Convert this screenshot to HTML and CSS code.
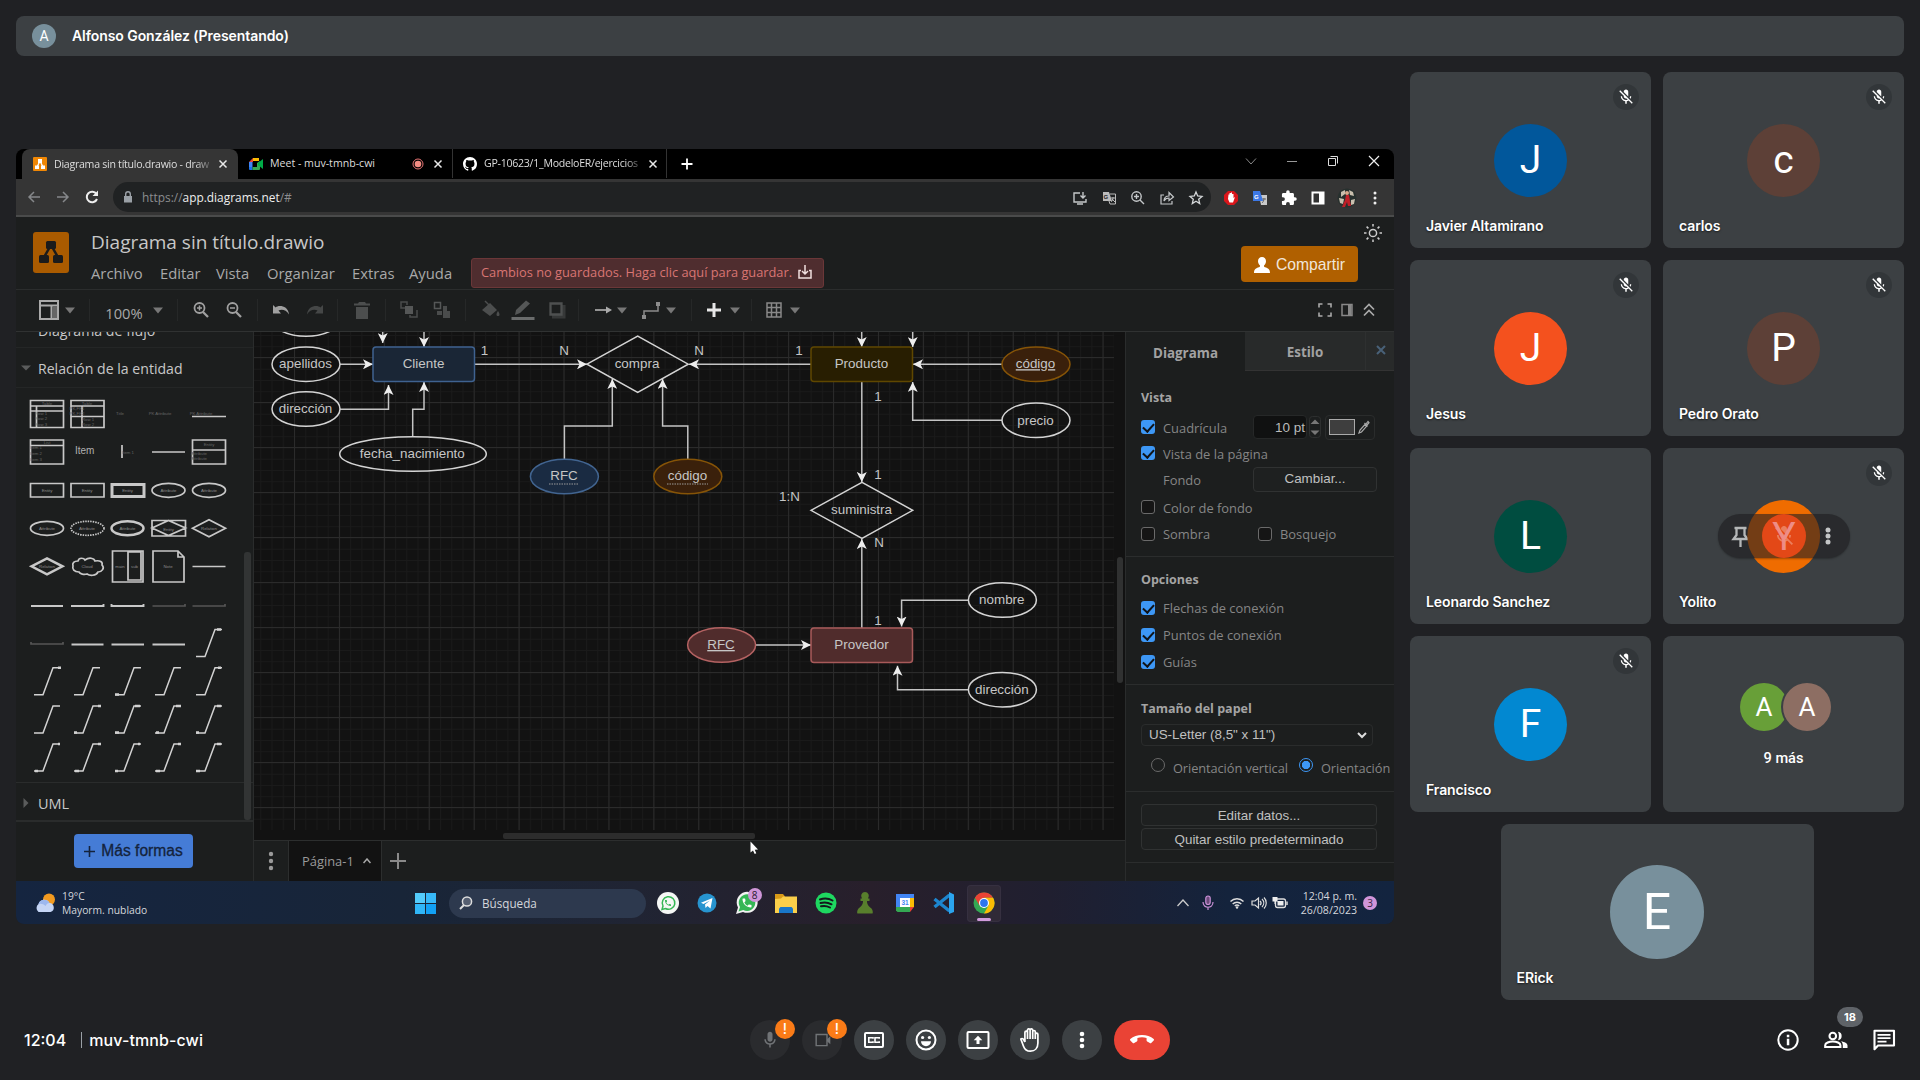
FILE: index.html
```html
<!DOCTYPE html>
<html lang="es">
<head>
<meta charset="utf-8">
<title>Meet - muv-tmnb-cwi</title>
<link rel="stylesheet" href="styles.css">
</head>
<body>
<svg class="defs" aria-hidden="true">
  <symbol id="mic-off" viewBox="0 0 24 24"><path fill="#fff" d="M19 11h-1.7c0 .74-.16 1.43-.43 2.05l1.23 1.23c.56-.98.9-2.09.9-3.28zm-4.02.17c0-.06.02-.11.02-.17V5c0-1.66-1.34-3-3-3S9 3.34 9 5v.18l5.98 5.99zM4.27 3L3 4.27l6.01 6.01V11c0 1.66 1.33 3 2.99 3 .22 0 .44-.03.65-.08l1.66 1.66c-.71.33-1.5.52-2.31.52-2.76 0-5.3-2.1-5.3-5.1H5c0 3.41 2.72 6.23 6 6.72V21h2v-3.28c.91-.13 1.77-.45 2.54-.9L19.73 21 21 19.73 4.27 3z"/></symbol>
  <symbol id="caret" viewBox="-12 -12 24 24"><path fill="#777" d="M-5-2.500H5L0 3.500z"/></symbol>
  <symbol id="sep" viewBox="-12 -12 24 24"><path stroke="#262828" d="M.5-11V11"/></symbol>
  <symbol id="close" viewBox="-12 -12 24 24"><path stroke="#e8e8e8" stroke-width="1.500" d="M-3.500-3.500L3.500 3.500M3.500-3.500L-3.500 3.500"/></symbol>
  <symbol id="phone" viewBox="0 0 24 24"><path d="M6.620 10.790c1.440 2.830 3.760 5.140 6.590 6.590l2.200-2.200c.27-.27.67-.36 1.020-.24 1.120.37 2.330.57 3.570.57.55 0 1 .45 1 1V20c0 .55-.45 1-1 1-9.390 0-17-7.610-17-17 0-.55.45-1 1-1h3.500c.55 0 1 .45 1 1 0 1.250.2 2.450.57 3.570.11.35.03.74-.25 1.020l-2.200 2.200z"/></symbol>
</svg>

<header class="presenter"><span class="presenter-avatar">A</span><span>Alfonso González (Presentando)</span></header>

<main class="stage">
  <section class="share">
    <div class="tabbar">
      <div class="tab tab-active">
        <svg class="fav" viewBox="0 0 14 14"><rect width="14" height="14" rx="1" fill="#f08705"/><path stroke="#fff" stroke-width="1.300" d="M7 4L4 10M7 4l3 6"/><path fill="#fff" d="M5 2h4v4H5zM2 8.500h4V12H2zM8 8.500h4V12H8z"/></svg>
        <span class="tab-title fade">Diagrama sin título.drawio - draw</span>
        <svg class="i" viewBox="-12 -12 24 24"><use href="#close" x="-12" y="-12" width="24" height="24"/></svg>
      </div>
      <div class="tab tab-meet">
        <svg class="fav" viewBox="0 0 14 14"><path fill="#ea4335" d="M0 5l4-4v4z"/><path fill="#fbbc04" d="M4 1h6v3H4z"/><path fill="#4285f4" d="M0 5h3.500v5H0z"/><path fill="#1a73e8" d="M0 10h3.500v3H1a1 1 0 0 1-1-1z"/><path fill="#34a853" d="M3.500 10H8V6l3-2v8a1 1 0 0 1-1 1H3.500z"/><path fill="#00ac47" d="M9 6l5-4v10L9 8z"/></svg>
        <span class="tab-title">Meet - muv-tmnb-cwi</span>
        <svg class="i" viewBox="-12 -12 24 24"><circle r="5" fill="none" stroke="#e57373"/><circle r="3.300" fill="#f28b82"/></svg>
        <svg class="i" viewBox="-12 -12 24 24"><use href="#close" x="-12" y="-12" width="24" height="24"/></svg>
      </div>
      <div class="tab tab-git">
        <svg class="fav" viewBox="0 0 16 16"><path fill="#fff" d="M8 0C3.580 0 0 3.580 0 8c0 3.540 2.290 6.530 5.470 7.590.4.07.55-.17.55-.38 0-.19-.01-.82-.01-1.490-2.010.37-2.530-.49-2.690-.94-.09-.23-.48-.94-.82-1.130-.28-.15-.68-.52-.01-.53.63-.01 1.080.58 1.230.82.72 1.210 1.870.87 2.330.66.07-.52.28-.87.51-1.070-1.780-.2-3.640-.89-3.640-3.950 0-.87.31-1.590.82-2.150-.08-.2-.36-1.020.08-2.120 0 0 .67-.21 2.200.82.64-.18 1.320-.27 2-.27s1.360.09 2 .27c1.530-1.040 2.200-.82 2.200-.82.44 1.100.16 1.920.08 2.120.51.56.82 1.270.82 2.150 0 3.070-1.870 3.750-3.650 3.950.29.25.54.73.54 1.480 0 1.070-.01 1.930-.01 2.200 0 .21.15.46.55.38A8.010 8.010 0 0 0 16 8c0-4.420-3.580-8-8-8z"/></svg>
        <span class="tab-title fade">GP-10623/1_ModeloER/ejercicios</span>
        <svg class="i" viewBox="-12 -12 24 24"><use href="#close" x="-12" y="-12" width="24" height="24"/></svg>
      </div>
      <svg class="i newtab" viewBox="-12 -12 24 24"><path stroke="#fff" stroke-width="1.800" d="M-5.500 0h11M0-5.500v11"/></svg>
      <div class="winctl">
        <svg class="i" viewBox="-12 -12 24 24"><path fill="none" stroke="#888" d="M-5-2.500L0 3l5-5.500"/></svg>
        <svg class="i" viewBox="-12 -12 24 24"><path stroke="#999" d="M-5 .5H5"/></svg>
        <svg class="i" viewBox="-12 -12 24 24"><path fill="none" stroke="#ddd" d="M-4.500-2.500h7v7h-7zM-2.500-4.500h7v7"/></svg>
        <svg class="i" viewBox="-12 -12 24 24"><path stroke="#eee" stroke-width="1.200" d="M-5-5L5 5M5-5L-5 5"/></svg>
      </div>
    </div>

    <div class="navbar">
      <svg class="i" viewBox="-12 -12 24 24"><path fill="none" stroke="#85878a" stroke-width="1.500" d="M6 0H-5M0-5l-5 5 5 5"/></svg>
      <svg class="i" viewBox="-12 -12 24 24"><path fill="none" stroke="#85878a" stroke-width="1.500" d="M-6 0H5M0-5l5 5-5 5"/></svg>
      <svg class="i" viewBox="-12 -12 24 24"><path fill="none" stroke="#eee" stroke-width="2" d="M4.500-3A5.300 5.300 0 1 0 5 2"/><path fill="#eee" d="M6-6.500V-1H.5z"/></svg>
      <div class="omnibox">
        <svg class="lock" viewBox="0 0 10 12"><path fill="#9aa0a6" d="M1 5h8v6.500H1z"/><path fill="none" stroke="#9aa0a6" stroke-width="1.400" d="M2.700 5V3a2.300 2.300 0 0 1 4.600 0v2"/></svg>
        <span class="url">https://<b>app.diagrams.net</b>/#</span>
        <div class="omni-icons">
          <svg class="i" viewBox="-12 -12 24 24"><path fill="none" stroke="#c4c7c9" stroke-width="1.400" d="M0-5h-6v9h12V1M-3 6h6M3-6v6M.5-2.500L3 0l2.500-2.500"/></svg>
          <svg class="i" viewBox="-12 -12 24 24"><path fill="#bbb" d="M-6-6h6l3 9h-9z"/><path fill="none" stroke="#bbb" d="M1-4h5.500V6H1L0 3M2 0h4M4-1v1c0 2-1 3-2 4M3 1l3 3"/><text x="-5.500" y="1" class="gmark dark">G</text></svg>
          <svg class="i" viewBox="-12 -12 24 24"><path fill="none" stroke="#c4c7c9" stroke-width="1.400" d="M2 2l4 4M-4-1.500h5M-1.500-4v5"/><circle cx="-1.500" cy="-1.500" r="4.700" fill="none" stroke="#c4c7c9" stroke-width="1.400"/></svg>
          <svg class="i" viewBox="-12 -12 24 24"><path fill="none" stroke="#c4c7c9" stroke-width="1.200" d="M-3-3h-3V6H5V3M-3 3c0-4 2-5 5-5v-3.500L6.500-1 2 2.500V0C0 0-2 1-3 3z"/></svg>
          <svg class="i" viewBox="-12 -12 24 24"><path fill="none" stroke="#d4d7d9" stroke-width="1.300" d="M0-6l1.700 4 4.300.4-3.300 2.800 1 4.300L0 3.200l-3.700 2.300 1-4.300L-6-1.600l4.300-.4z"/></svg>
        </div>
      </div>
      <div class="ext">
        <svg class="i" viewBox="-12 -12 24 24"><path fill="#d9161b" d="M-3-7h6l4 4v6L3 7h-6l-4-4v-6z"/><path fill="#fff" d="M-2.500-3.500h1V-5H0v-.5h1V-4h1.500v4L4-1 2 4.500h-3.500L-3 1z"/></svg>
        <svg class="i" viewBox="-12 -12 24 24"><path fill="#c9c9c9" d="M-1-3h8v10H1z"/><path stroke="#666" fill="none" d="M2 1h4M4 0c0 3-1 4-2 5"/><path fill="#3c78e6" d="M-7-7h7l3 10h-10z"/><text x="-6" y="1" class="gmark">G</text></svg>
        <svg class="i" viewBox="-5 -5 34 34"><path fill="#fff" d="M20.500 11H19V7c0-1.100-.9-2-2-2h-4V3.500a2.500 2.500 0 0 0-5 0V5H4c-1.100 0-2 .9-2 2v3.800h1.500a2.700 2.700 0 0 1 0 5.400H2V20c0 1.100.9 2 2 2h3.800v-1.500a2.700 2.700 0 0 1 5.400 0V22H17c1.100 0 2-.9 2-2v-4h1.500a2.500 2.500 0 0 0 0-5z"/></svg>
        <svg class="i" viewBox="-12 -12 24 24"><path fill="#fff" d="M-6.500-6.500h13v13h-13z"/><path fill="#333" d="M-4.500-4.500H1v9h-5.500z"/></svg>
        <svg class="i" viewBox="-12 -12 24 24"><circle r="9.500" fill="#27302e"/><path fill="#c9bfae" d="M-6-6l4-2v4l-4 3zM2-8l4 2 1 4-4-1zM-8 0l5 1-1 5-3-1zM4 2l4-1-1 5-3 1z"/><path fill="#c01f28" d="M-1-3l3 0 1 6 1 5h-3l-1-4-2 5h-3l3-7z"/><circle cy="-5" r="2" fill="#d9a98c"/></svg>
        <svg class="i" viewBox="-12 -12 24 24"><g fill="#eee"><circle cy="-5" r="1.500"/><circle r="1.500"/><circle cy="5" r="1.500"/></g></svg>
      </div>
    </div>

    <div class="app-head">
      <svg class="logo" viewBox="0 0 36 41"><rect width="36" height="41" rx="3" fill="#aa5b00"/><path stroke="#1b1b1b" stroke-width="2.500" d="M18 13l-8 14M18 13l8 14"/><g fill="#1b1b1b"><rect x="13" y="9" width="10" height="8" rx="1.500"/><rect x="6" y="23" width="10" height="8" rx="1.500"/><rect x="20" y="23" width="10" height="8" rx="1.500"/></g></svg>
      <div class="head-main">
        <div class="doc-title">Diagrama sin título.drawio</div>
        <div class="menu">
          <span>Archivo</span><span>Editar</span><span>Vista</span><span>Organizar</span><span>Extras</span><span>Ayuda</span>
          <div class="unsaved"><span>Cambios no guardados. Haga clic aquí para guardar.</span>
            <svg viewBox="0 0 14 14"><path fill="none" stroke="#f1dede" stroke-width="1.500" d="M3 5.500H1V13h12V5.500h-2M7 0v9M4 6l3 3 3-3"/></svg></div>
        </div>
      </div>
      <div class="head-side">
        <svg class="i sun" viewBox="-12 -12 24 24"><g fill="none" stroke="#ccc" stroke-width="1.500"><circle r="3.600"/><path d="M0-9v2.500M0 6.500V9M-9 0h2.500M6.500 0H9M-6.400-6.400l1.800 1.800M4.600 4.600l1.800 1.800M-6.400 6.400l1.800-1.800M4.600-4.600l1.800-1.800"/></g></svg>
        <div class="share-btn"><svg viewBox="0 0 16 16"><path fill="#fff" d="M8 0c2.500 0 4 1.800 4 4.200 0 2-1 3.300-2 4.200 0 1 0 1.300 1 1.800 3 1 5 1.800 5 5.800H0c0-4 2-4.800 5-5.800 1-.5 1-.8 1-1.800-1-.9-2-2.200-2-4.200C4 1.800 5.500 0 8 0z"/></svg>Compartir</div>
      </div>
    </div>

    <div class="toolbar">
      <svg class="i" viewBox="-12 -12 24 24"><path fill="none" stroke="#aaa" stroke-width="2" d="M-9-9H9V9H-9zM-9-4.500H9M2.500-4V9"/><path fill="#666" d="M3.500-3.500H8V8H3.500z"/></svg>
      <svg class="i"><use href="#caret"/></svg>
      <svg class="i"><use href="#sep"/></svg>
      <span class="zoom">100%</span>
      <svg class="i"><use href="#caret"/></svg>
      <svg class="i"><use href="#sep"/></svg>
      <svg class="i" viewBox="-12 -12 24 24"><g fill="none" stroke="#a0a0a0" stroke-width="1.800"><circle cx="-1.500" cy="-2" r="5"/><path d="M2 2l5 5" stroke-width="2.300"/><path stroke-width="1.500" d="M-4-2h5M-1.500-4.500v5"/></g></svg>
      <svg class="i" viewBox="-12 -12 24 24"><g fill="none" stroke="#a0a0a0" stroke-width="1.800"><circle cx="-1.500" cy="-2" r="5"/><path d="M2 2l5 5" stroke-width="2.300"/><path stroke-width="1.500" d="M-4-2h5"/></g></svg>
      <svg class="i"><use href="#sep"/></svg>
      <svg class="i" viewBox="-12 -12 24 24"><path fill="#a0a0a0" d="M-8-5l2.700 2.500C-3-5 7-5 8 4.500 5-1 0-1-2.500.5L0 3.500h-8z"/></svg>
      <svg class="i" viewBox="-12 -12 24 24"><path fill="#454747" d="M8-5L5.300-2.500C3-5-7-5-8 4.500-5-1 0-1 2.500.5L0 3.500h8z"/></svg>
      <svg class="i"><use href="#sep"/></svg>
      <svg class="i" viewBox="-12 -12 24 24"><path fill="#4c4e4e" d="M-8-6.500h4l1-1.500h6l1 1.500h4v2H-8zM-6-3H6V9H-6z"/></svg>
      <svg class="i"><use href="#sep"/></svg>
      <svg class="i" viewBox="-12 -12 24 24"><path fill="none" stroke="#4a4c4c" stroke-width="1.500" d="M-4-2h-4v-6h6v3M8 0v7H1V5"/><path fill="#555757" d="M-4-4h8v8h-8z"/></svg>
      <svg class="i" viewBox="-12 -12 24 24"><path fill="none" stroke="#555757" stroke-width="1.500" d="M-7.500-7.500h6v6h-6z"/><path fill="#4a4c4c" d="M1-4h4v5H1zM-5 1h5v4h-5zM1 1h7v7H1z"/></svg>
      <svg class="i"><use href="#sep"/></svg>
      <svg class="i" viewBox="-12 -12 24 24"><path fill="none" stroke="#4c4e4e" stroke-width="1.500" d="M-5-9L3-1"/><path fill="#4c4e4e" d="M-8 0L0-7l7 7-7 6zM8 1c2 3 2 5 0 5s-2-2 0-5z"/></svg>
      <svg class="i" viewBox="-12 -12 24 24"><path fill="#555757" d="M-8 5l1-5L3-9.500l4 3L-3 3z"/><path fill="#6a6c6c" d="M-11.500 7h23v3h-23z"/></svg>
      <svg class="i" viewBox="-12 -12 24 24"><path fill="#363838" d="M-5-5H8.500V8.500H-5z"/><path fill="#1c1e1e" stroke="#4e5050" stroke-width="2.300" d="M-6.500-6.500h11v11h-11z"/></svg>
      <svg class="i"><use href="#sep"/></svg>
      <svg class="i" viewBox="-12 -12 24 24"><path stroke="#aaa" stroke-width="1.700" d="M-8 0H5"/><path fill="#aaa" d="M3-3.500L9 0 3 3.500z"/></svg>
      <svg class="i"><use href="#caret"/></svg>
      <svg class="i" viewBox="-12 -12 24 24"><path fill="none" stroke="#8c8c8c" stroke-width="1.500" d="M-7 6V1H7v-6"/><path fill="#8c8c8c" d="M-9 5h4v4h-4zM5-8h4v4H5z"/></svg>
      <svg class="i"><use href="#caret"/></svg>
      <svg class="i"><use href="#sep"/></svg>
      <svg class="i" viewBox="-12 -12 24 24"><path stroke="#e8e8e8" stroke-width="3" d="M-7 0H7M0-7V7"/></svg>
      <svg class="i"><use href="#caret"/></svg>
      <svg class="i"><use href="#sep"/></svg>
      <svg class="i" viewBox="-12 -12 24 24"><path fill="none" stroke="#888" stroke-width="1.500" d="M-7-7H7V7H-7zM-2.500-7V7M2.500-7V7M-7-2.500H7M-7 2.500H7"/></svg>
      <svg class="i"><use href="#caret"/></svg>
      <svg class="i" viewBox="-12 -12 24 24"><path fill="none" stroke="#aaa" stroke-width="1.600" d="M-2.500-6H-6v3.500M2.500-6H6v3.500M-2.500 6H-6V2.500M2.500 6H6V2.500"/></svg>
      <svg class="i" viewBox="-12 -12 24 24"><path fill="none" stroke="#888" stroke-width="1.500" d="M-5-5.500H5v11H-5z"/><path fill="#888" d="M1-5h3.500V5H1z"/></svg>
      <svg class="i" viewBox="-12 -12 24 24"><path fill="none" stroke="#aaa" stroke-width="1.700" d="M-5-.5l5-5 5 5M-5 5.500l5-5 5 5"/></svg>
    </div>

    <div class="work">
      <aside class="sidebar">
        <div class="cut-row"><span>Diagrama de flujo</span></div>
        <div class="lib-head"><svg viewBox="0 0 12 12"><path fill="#5a5c5c" d="M1 2.500h10L6 7.500z"/></svg>Relación de la entidad</div>
        <svg class="palette" viewBox="16 388 228 394">
          <defs>
            <path id="elbow" d="M0 27.500h9L19 .5h7"/>
          </defs>
          <g fill="none" stroke="#c8c8c8" stroke-width="1.700">
            <path d="M30.500 400.500h33v27h-33zM30 406h34M30 411h34M36.500 406v21M71 400.500h33v27H71zM71 406h33M71 416.500h33M82 406v21M192 416.500h34"/>
            <path d="M30.500 440h33v24h-33zM30 445.500h34M122 445v13M152 452h33M192.500 440h33v24h-33zM192 450h34"/>
            <path d="M30.500 483.500h33v13.500h-33zM71 483.500h33v13.500H71z"/>
            <path stroke-width="3" d="M112 484.500h32v12h-32z"/>
            <ellipse cx="168.500" cy="490.300" rx="16.500" ry="7"/><ellipse cx="209" cy="490.300" rx="16.500" ry="7"/>
            <ellipse cx="47" cy="528.300" rx="16.500" ry="7"/><ellipse cx="87.500" cy="528.300" rx="16.500" ry="7" stroke-dasharray="1.500 1"/><ellipse cx="127.500" cy="528.300" rx="16" ry="7" stroke-width="2.500"/>
            <path d="M152 520.500h33.500V536H152zM152 528l16.500-7.500 17 7.500-17 7.500zM192.500 528.300l16.500-8.500 16.500 8.500-16.500 8.500z"/>
            <path stroke-width="2.500" d="M31.500 566.300l15.500-8 15.500 8-15.500 8z"/>
            <path d="M78 561c1-4 6-3 7-1 4-3 9-2 10 1 5-1 8 1 7 4 3 3 0 7-4 7-2 4-8 4-11 2-3 1-7 0-8-2-5 0-7-3-6-6-1-3 1-5 5-5z"/>
            <path d="M112.500 551h30.500v31h-30.500zM128 552h13v28h-13zM153 551h25l6 6v25h-31zM178 551v6h6M192.500 566.500h33"/>
            <path d="M31 606h32M71 606h32.500v-2M111.500 604v2h32v-2M71.500 644.500h32M111.500 644.500h32.500M152.500 644.500h32.500" stroke-width="1.900"/>
            <path stroke="#555" d="M152.500 606H185v-2M192.500 606H225v-2M31 642v2h32v-2"/>
          </g>
          <g fill="none" stroke="#d2d2d2" stroke-width="1.500">
            <use href="#elbow" x="196" y="629"/>
            <use href="#elbow" x="34" y="667.300"/><use href="#elbow" x="74" y="667.300"/><use href="#elbow" x="115" y="667.300"/><use href="#elbow" x="155" y="667.300"/><use href="#elbow" x="196" y="667.300"/>
            <use href="#elbow" x="34" y="705.500"/><use href="#elbow" x="74" y="705.500"/><use href="#elbow" x="115" y="705.500"/><use href="#elbow" x="155" y="705.500"/><use href="#elbow" x="196" y="705.500"/>
            <use href="#elbow" x="34" y="743.500"/><use href="#elbow" x="74" y="743.500"/><use href="#elbow" x="115" y="743.500"/><use href="#elbow" x="155" y="743.500"/><use href="#elbow" x="196" y="743.500"/>
            <path stroke-width="2.600" d="M217 629.500h4M58 667.800h3M218 667.800h3M115 694.500h4M98 706h3M135 706h5M176 706h5M217 706h4M74 732.500h3M115 732.500h4M156 732.500h3M196 732.500h3M58 744h2M98 744h3M138 744h2M178 744h3M217 744h4M35 771h3M75 771h4M115 771h3M156 771h4M196 771h4"/>
          </g>
          <g class="tiny">
            <text x="47" y="404.500">Table</text><text x="87" y="404.500">Table</text><text x="120" y="415">Title</text><text x="160" y="415">PK Attribute</text><text x="201" y="415">PK Attribute</text>
            <text x="47" y="444">List</text><text x="36" y="449">Item 1</text><text x="36" y="455">Item 2</text><text x="36" y="461">Item 3</text><text x="128" y="454">Item 1</text><text x="209" y="446">Entity</text><text x="199" y="455">Attribute</text><text x="199" y="460">Attribute</text>
            <text x="41" y="415">Row 1</text><text x="41" y="420">Row 2</text><text x="41" y="426">Row 3</text><text x="77" y="410">PK,FK1</text><text x="77" y="415">PK,FK2</text><text x="88" y="421">Row 1</text><text x="88" y="426">Row 2</text>
          </g>
          <g class="tiny lit">
            <text x="47" y="492">Entity</text><text x="87" y="492">Entity</text><text x="127.500" y="492">Entity</text><text x="168.500" y="492">Attribute</text><text x="209" y="492">Attribute</text>
            <text x="47" y="530">Attribute</text><text x="87" y="530">Attribute</text><text x="127.500" y="530">Attribute</text><text x="168.500" y="531">Entity</text><text x="209" y="530">Relation</text>
            <text x="47" y="568">Relation</text><text x="87" y="568">Cloud</text><text x="120" y="568">main</text><text x="134.500" y="568">sub</text><text x="168" y="568">Note</text>
          </g>
          <text x="75" y="453.500" class="item">Item</text>
        </svg>
        <div class="lib-head lib-uml"><svg viewBox="0 0 12 12"><path fill="#5a5c5c" d="M3.500 1v10l5-5z"/></svg>UML</div>
        <div class="more"><button class="more-btn"><svg viewBox="0 0 11 11"><path stroke="#14233c" stroke-width="1.600" d="M0 5.500h11M5.500 0v11"/></svg>Más formas</button></div>
        <i class="side-scroll"></i>
      </aside>

      <section class="canvas">
        <svg class="diagram" viewBox="254 332 871 508">
          <defs>
            <pattern id="minor" x="294" y="402.500" width="11.230" height="11.250" patternUnits="userSpaceOnUse"><path fill="none" stroke="#1a1a1a" d="M.5 0v11.250M0 .5h11.230"/></pattern>
            <pattern id="major" x="294" y="402" width="44.920" height="45" patternUnits="userSpaceOnUse"><path fill="none" stroke="#2b2b2b" d="M.5 0v45M0 .5h44.920"/></pattern>
            <marker id="arrow" viewBox="0 0 10 10" refX="10" refY="5" markerWidth="10" markerHeight="10" markerUnits="userSpaceOnUse" orient="auto"><path fill="#eee" d="M0 0l10 5-10 5 2.500-5z"/></marker>
          </defs>
          <rect x="254" y="332" width="860" height="498" fill="url(#minor)"/>
          <rect x="254" y="332" width="860" height="498" fill="url(#major)"/>
          <g fill="none" stroke="#c4c4c4" stroke-width="1.500" marker-end="url(#arrow)">
            <path d="M340 364.300h33"/>
            <path d="M382.700 325v18"/><path d="M424 325v22"/>
            <path d="M340 409.300h48.500V385"/><path d="M412.700 437v-27.700H424V382"/>
            <path d="M475 364.300h112"/><path d="M811 364.300H689"/>
            <path d="M861.700 325v22"/><path d="M912.700 325v22"/>
            <path d="M1002 364.300h-89"/><path d="M1002 420.300h-89.300V382"/>
            <path d="M861.800 382v100"/><path d="M861.800 628v-89"/>
            <path d="M564.400 459v-33h47.900v-47"/><path d="M687.800 459v-33h-25.200v-47"/>
            <path d="M968.600 600.300h-67v26.200"/><path d="M968.600 689.700h-71.100v-24"/><path d="M756 645h55"/>
          </g>
          <g fill="none" stroke="#d4d4d4" stroke-width="1.500">
            <ellipse cx="306" cy="319" rx="34" ry="17.300"/><ellipse cx="306" cy="364.200" rx="34" ry="17.300"/><ellipse cx="306" cy="409" rx="34" ry="17.300"/>
            <ellipse cx="413" cy="454" rx="73.300" ry="17.300"/>
            <path d="M587 364.200l50.700-28.200 50.500 28.200-50.500 28.200zM811 510.300l51-28 50.700 28-50.700 28z"/>
            <ellipse cx="1036" cy="420.300" rx="34" ry="17.300"/><ellipse cx="1002.400" cy="600" rx="34" ry="17.300"/><ellipse cx="1002.400" cy="689.700" rx="34" ry="17.300"/>
          </g>
          <g stroke-width="1.500">
            <rect x="373" y="347" width="101.500" height="34.500" rx="3" fill="#1a2636" stroke="#3f6290"/>
            <rect x="811" y="347" width="101.500" height="34.500" rx="3" fill="#281e01" stroke="#5f4700"/>
            <rect x="811" y="628" width="101.500" height="34.500" rx="3" fill="#502c2c" stroke="#a85a5a"/>
            <ellipse cx="1036" cy="364.300" rx="34" ry="17.300" fill="#3a200b" stroke="#865407"/>
            <ellipse cx="564.400" cy="476.500" rx="34" ry="17.300" fill="#1a2b42" stroke="#426591"/>
            <ellipse cx="687.800" cy="476.500" rx="34" ry="17.300" fill="#3a200b" stroke="#865407"/>
            <ellipse cx="721.600" cy="645" rx="34" ry="17.300" fill="#502c2c" stroke="#b46262"/>
          </g>
          <path stroke="#999" stroke-dasharray="1.500 1" d="M549 484h29M667 484h41"/>
          <g class="node">
            <text x="305.500" y="368.200">apellidos</text><text x="305.500" y="413.200">dirección</text><text x="412.300" y="458.200">fecha_nacimiento</text><text x="423.500" y="368.200">Cliente</text>
            <text x="637" y="368.200">compra</text><text x="861.500" y="368.200">Producto</text><text x="1035.500" y="368.200" class="u">código</text><text x="1035.500" y="424.500">precio</text>
            <text x="564" y="480.200">RFC</text><text x="687.500" y="480.200">código</text><text x="861.500" y="514.200">suministra</text>
            <text x="1001.800" y="604.200">nombre</text><text x="861.500" y="649">Provedor</text><text x="721" y="649" class="u">RFC</text><text x="1001.800" y="694">dirección</text>
            <text x="484.500" y="355.200">1</text><text x="564" y="355.200">N</text><text x="699" y="355.200">N</text><text x="799" y="355.200">1</text><text x="878" y="401">1</text><text x="878" y="479">1</text><text x="789.500" y="501.200">1:N</text><text x="879" y="546.700">N</text><text x="878" y="625">1</text>
          </g>
          <rect x="503" y="833" width="252" height="6" rx="2" fill="#2c2c2c"/>
          <rect x="1117" y="557" width="6" height="126" rx="3" fill="#303131"/>
        </svg>
        <div class="pages">
          <svg class="i dots" viewBox="-12 -12 24 24"><g fill="#9a9a9a"><circle cy="-7" r="2.200"/><circle r="2.200"/><circle cy="7" r="2.200"/></g></svg>
          <div class="page-tab">Página-1<svg viewBox="0 0 8 6"><path fill="none" stroke="#aaa" stroke-width="1.500" d="M.5 5L4 1l3.500 4"/></svg></div>
          <svg class="i add" viewBox="-12 -12 24 24"><path stroke="#8a8a8a" stroke-width="2" d="M-8 0H8M0-8V8"/></svg>
        </div>
        <svg class="cursor" viewBox="0 0 9 13"><path fill="#fff" d="M.5.500v11l2.500-2 1.700 3.500 1.600-.8L4.700 8.800l3.300-.3z"/></svg>
      </section>

      <aside class="format">
        <div class="ftabs"><div class="ftab-on">Diagrama</div><div class="ftab">Estilo</div><div class="fclose"><svg viewBox="0 0 10 10"><path stroke="#496178" stroke-width="2" d="M1 1l8 8M9 1L1 9"/></svg></div></div>
        <div class="fsec sec-view">
          <h4>Vista</h4>
          <div class="frow r1"><i class="cb on"></i><span class="lab">Cuadrícula</span><span class="num">10 pt</span><svg class="spin" viewBox="0 0 12 22"><rect x=".5" y=".5" width="11" height="21" rx="3" fill="none" stroke="#2d2f2f"/><path fill="#777" d="M1.500 8L6 3.500 10.500 8zM1.500 14.500h9L6 19z"/></svg>
            <span class="swatch"><i></i><svg viewBox="0 0 12 14"><path fill="none" stroke="#aaa" stroke-width="1.200" d="M1 13l1-3 5-5.500 1.500 1.800L3.500 12zM6.500 3l3 3.500M8 4l2-2.500 1 1.200L9 5"/></svg></span></div>
          <div class="frow r2"><i class="cb on"></i><span class="lab">Vista de la página</span></div>
          <div class="frow r3"><span class="lab fondo">Fondo</span><span class="btn">Cambiar...</span></div>
          <div class="frow r4"><i class="cb"></i><span class="lab">Color de fondo</span></div>
          <div class="frow r5"><i class="cb"></i><span class="lab half">Sombra</span><i class="cb"></i><span class="lab">Bosquejo</span></div>
        </div>
        <div class="fsec sec-opt">
          <h4>Opciones</h4>
          <div class="frow"><i class="cb on"></i><span class="lab">Flechas de conexión</span></div>
          <div class="frow"><i class="cb on"></i><span class="lab">Puntos de conexión</span></div>
          <div class="frow"><i class="cb on"></i><span class="lab">Guías</span></div>
        </div>
        <div class="fsec sec-paper">
          <h4>Tamaño del papel</h4>
          <div class="select">US-Letter (8,5" x 11")<svg viewBox="0 0 10 7"><path fill="none" stroke="#ddd" stroke-width="2" d="M1 1l4 4 4-4"/></svg></div>
          <div class="radios"><i class="rb"></i><span class="lab vert">Orientación vertical</span><i class="rb sel"></i><span class="lab">Orientación</span></div>
        </div>
        <div class="fsec sec-btn"><span class="btn">Editar datos...</span><span class="btn">Quitar estilo predeterminado</span></div>
      </aside>
    </div>

    <footer class="taskbar">
      <svg class="weather" viewBox="0 0 22 20"><circle cx="15.500" cy="6.500" r="6" fill="#f29a1f"/><path fill="#c5d5f5" d="M5 19a5 5 0 0 1 0-8 6 6 0 0 1 11-1 4.600 4.600 0 0 1 1 9z"/><path fill="#9db8ee" d="M5 11a6 6 0 0 1 11-1c-2 0-3 1-4 3-2-2-4-2.500-7-2z"/></svg>
      <div class="wtext">19°C<br>Mayorm. nublado</div>
      <svg class="start" viewBox="0 0 21 21"><path fill="#53cbfb" d="M0 0h10v10H0z"/><path fill="#37b9f9" d="M11 0h10v10H11z"/><path fill="#30b6f8" d="M0 11h10v10H0z"/><path fill="#12a1f5" d="M11 11h10v10H11z"/></svg>
      <div class="search"><svg viewBox="0 0 14 14"><circle cx="8" cy="5.500" r="4.600" fill="#555e70" stroke="#ddd" stroke-width="1.500"/><path stroke="#ddd" stroke-width="2" d="M1 13l4-4"/></svg>Búsqueda</div>
      <div class="apps">
        <svg class="a" viewBox="-12 -12 24 24"><circle r="11" fill="#f5f7f5"/><path fill="none" stroke="#35b755" stroke-width="1.500" d="M-6 6.500l1-3.500a6.300 6.300 0 1 1 2.500 2.500z"/><use href="#phone" x="-4" y="-4" width="8" height="8" fill="#35b755"/></svg>
        <svg class="a" viewBox="-12 -12 24 24"><circle r="9.500" fill="#2794cf"/><path fill="#fff" d="M-6-.3L5.500-5 3.500 5.500.5 3-1.500 5l-.5-3.500L3-2.500-3.500 1z"/></svg>
        <svg class="a" viewBox="-12 -12 24 24"><path fill="#f2f2f2" d="M-11 11l2-6.500A10.500 10.500 0 1 1-4 9z"/><path fill="#35b755" d="M-8.500 8.500L-7 4a8.300 8.300 0 1 1 3.300 3z"/><use href="#phone" x="-6" y="-6" width="12" height="12" fill="#fff"/></svg>
        <svg class="a" viewBox="-12 -12 24 24"><path fill="#d99a18" d="M-11-9h8l2 2.500v4h-10z"/><path fill="#fbcf4a" d="M-11-4l6-.5 2-2h14V10h-22z"/><path fill="#1977c9" d="M-7 10V5.500l1.500-1.500h11L7 5.500V10z"/></svg>
        <svg class="a" viewBox="-12 -12 24 24"><circle r="10.500" fill="#1ed760"/><path fill="none" stroke="#14181c" stroke-width="2" stroke-linecap="round" d="M-6-3.500c4-1.500 9-1 12.500 1M-5.500 0C-2-1 2-.7 5.500 1.300M-5 3.300c3-.8 6-.5 9 1.200"/></svg>
        <svg class="a" viewBox="-12 -12 24 24"><path fill="#587f2c" d="M0-11a4 4 0 0 1 3 6.500h1.500V-2H2c0 4 2 5.500 4.500 7.500C8 7 8 10.500 7.500 10.500h-15C-8 10.500-8 7-6.500 5.500-4 3.500-2 2-2-2h-2.500v-2.500H-3A4 4 0 0 1 0-11z"/></svg>
        <svg class="a" viewBox="-12 -12 24 24"><path fill="#4285f4" d="M-9-9H9v13H-9z"/><path fill="#fbbc04" d="M5-5h4v9H5z"/><path fill="#34a853" d="M-9 4H5v5H-7.500L-9 7.500z"/><path fill="#ea4335" d="M5 4h4L5 9z"/><path fill="#fff" d="M-5-5H5V4H-5z"/><text x="0" y="2.300" class="cal">31</text></svg>
        <svg class="a" viewBox="-12 -12 24 24"><path fill="none" stroke="#1d86cf" stroke-width="3.400" d="M-9.500 4L5.500-8M-9.500-4L5.500 8"/><path fill="#2ba4ee" d="M5-11l5 2.500V9L5 11z"/></svg>
        <div class="chrome"><svg class="a" viewBox="-12 -12 24 24"><circle r="10.500" fill="#34a853"/><path fill="#ea4335" d="M-9.100-5.250A10.500 10.500 0 0 1 9.100-5.250H0L-4.500 2.600z"/><path fill="#fbbc04" d="M9.100-5.250A10.500 10.500 0 0 1 0 10.500L4.550 2.600 0-5.250z"/><circle r="5" fill="#fff"/><circle r="3.900" fill="#2f75ec"/></svg></div>
        <span class="wbadge">8</span>
      </div>
      <div class="tray">
        <svg class="i" viewBox="-12 -12 24 24"><path fill="none" stroke="#ccc" stroke-width="1.300" d="M-5.500 3L0-3l5.500 6"/></svg>
        <svg class="i" viewBox="-12 -12 24 24"><rect x="-2.200" y="-7" width="4.400" height="8.500" rx="2.200" fill="#6b4a7a" stroke="#c990d6" stroke-width="1.200"/><path fill="none" stroke="#c990d6" stroke-width="1.200" d="M-5-1c0 7 10 7 10 0M0 4v3"/></svg>
        <svg class="i" viewBox="-12 -12 24 24"><g fill="none" stroke="#ddd" stroke-width="1.400"><path d="M-6.500-1.500a9 9 0 0 1 13 0M-4.300 1a6 6 0 0 1 8.600 0M-2.200 3a3.200 3.200 0 0 1 4.400 0"/></g><circle cy="4.500" r="1.200" fill="#ddd"/></svg>
        <svg class="i" viewBox="-12 -12 24 24"><path fill="none" stroke="#ddd" stroke-width="1.200" d="M-6-2h3l3.500-3V5L-3 2h-3zM2-2.200c1.300 1.300 1.300 3.100 0 4.400M4-4c2.300 2.300 2.300 5.700 0 8M6-5.500c3 3 3 8 0 11"/></svg>
        <svg class="i" viewBox="-12 -12 24 24"><rect x="-4.500" y="-4" width="10" height="8.500" rx="2" fill="none" stroke="#ddd" stroke-width="1.300"/><path stroke="#ddd" stroke-width="1.500" d="M7-1.500v3.500"/><path fill="#eee" d="M-7.500-6h5v4.500h-2V1h-1v-2.500h-2zM-2.500-2H3.500v4.500h-6z"/></svg>
        <div class="clock">12:04 p. m.<br>26/08/2023</div>
        <span class="tray-badge">3</span>
      </div>
    </footer>
  </section>

  <aside class="people">
    <div class="tile"><span class="av blue">J</span><span class="mute"><svg><use href="#mic-off"/></svg></span><span class="name">Javier Altamirano</span></div>
    <div class="tile"><span class="av brown">c</span><span class="mute"><svg><use href="#mic-off"/></svg></span><span class="name">carlos</span></div>
    <div class="tile"><span class="av orange">J</span><span class="mute"><svg><use href="#mic-off"/></svg></span><span class="name">Jesus</span></div>
    <div class="tile"><span class="av brown">P</span><span class="mute"><svg><use href="#mic-off"/></svg></span><span class="name">Pedro Orato</span></div>
    <div class="tile"><span class="av green">L</span><span class="name">Leonardo Sanchez</span></div>
    <div class="tile"><span class="av amber"></span>
      <div class="hover"><svg viewBox="-66 -22 132 44"><path fill="none" stroke="#b5b7b8" stroke-width="2.300" d="M-49.500-8h12M-47.500-8v7l-3 4h14l-3-4v-7M-43.500 3v8"/></svg></div>
      <svg class="hover-front" viewBox="-66 -22 132 44"><path fill="#733d15" d="M-29.300-22h58a36.500 36.500 0 0 1 0 44h-58a36.500 36.500 0 0 1 0-44z"/><circle r="22" fill="#e34817"/><use href="#mic-off" x="-12" y="-12" width="24" height="24" opacity=".3"/><text x="0" y="14" class="ghost">Y</text><g fill="#c4c6c7"><circle cx="44" cy="-6" r="2.500"/><circle cx="44" cy="0" r="2.500"/><circle cx="44" cy="6" r="2.500"/></g></svg>
      <span class="mute"><svg><use href="#mic-off"/></svg></span><span class="name">Yolito</span></div>
    <div class="tile"><span class="av sky">F</span><span class="mute"><svg><use href="#mic-off"/></svg></span><span class="name">Francisco</span></div>
    <div class="tile more-people"><div class="pair"><span class="mini lime">A</span><span class="mini taupe">A</span></div><div>9 más</div></div>
    <div class="tile self"><span class="av slate">E</span><span class="name">ERick</span></div>
  </aside>
</main>

<footer class="callbar">
  <div class="meta"><span>12:04</span><i></i><span>muv-tmnb-cwi</span></div>
  <div class="controls">
    <span class="cbtn off"><svg viewBox="0 0 24 24"><path fill="#707376" d="M12 14c1.660 0 3-1.340 3-3V5c0-1.660-1.340-3-3-3S9 3.340 9 5v6c0 1.660 1.340 3 3 3zm5-3c0 2.760-2.240 5-5 5s-5-2.240-5-5H5.200c0 3.500 2.600 6.200 5.900 6.700V21h1.800v-3.300c3.300-.5 5.900-3.200 5.900-6.700z"/></svg><b>!</b></span>
    <span class="cbtn off"><svg viewBox="0 0 24 24"><path fill="none" stroke="#707376" stroke-width="1.700" d="M5 5.300h13v13.400H5z"/><path fill="#707376" d="M18 11L22 7.500v9.500l-4-3.500z"/></svg><b>!</b></span>
    <span class="cbtn"><svg viewBox="0 0 24 24"><rect x="3" y="5" width="18" height="14" rx="1" fill="none" stroke="#fff" stroke-width="2"/><path fill="none" stroke="#fff" stroke-width="1.600" d="M11 10.800V9.800H6.800v4.400H11v-1M17.200 10.800v-1H13v4.400h4.200v-1"/></svg></span>
    <span class="cbtn"><svg viewBox="0 0 24 24"><circle cx="12" cy="12" r="9.500" fill="none" stroke="#fff" stroke-width="2"/><circle cx="8.600" cy="9.500" r="1.600" fill="#fff"/><circle cx="15.400" cy="9.500" r="1.600" fill="#fff"/><path fill="#fff" d="M7 13.300h10a5 5 0 0 1-10 0z"/></svg></span>
    <span class="cbtn"><svg viewBox="0 0 24 24"><rect x="1.500" y="4" width="21" height="16" rx="1" fill="none" stroke="#fff" stroke-width="2"/><path fill="#fff" d="M12 7.700l4.300 4.500h-2.800V16h-3v-3.800H7.700z"/></svg></span>
    <span class="cbtn"><svg viewBox="0 0 24 24"><path fill="none" stroke="#fff" stroke-width="1.700" stroke-linejoin="round" d="M6.900 14V4.500a1.300 1.300 0 0 1 2.600 0V11M9.500 11V2.200a1.300 1.300 0 0 1 2.600-.2V11M12.100 11V2a1.300 1.300 0 0 1 2.600.2V11M14.700 11V3.800a1.300 1.300 0 0 1 2.600 0V11M17.300 10V6.500a1.300 1.300 0 0 1 2.600 0V15c0 5-3 8.200-7.500 8.200-3.500 0-5.700-1.700-6.900-5L2.800 10.900c1.500-.8 2.700 0 3.100 1.100l1 2"/></svg></span>
    <span class="cbtn"><svg viewBox="0 0 24 24"><g fill="#fff"><circle cx="12" cy="6" r="2.300"/><circle cx="12" cy="12" r="2.300"/><circle cx="12" cy="18" r="2.300"/></g></svg></span>
    <span class="cbtn end"><svg viewBox="0 0 24 24"><path fill="#fff" d="M12 9.300c-1.600 0-3.150.25-4.600.72v2.500c0 .39-.23.74-.56.9-.98.49-1.870.9-2.660 1.600-.4.300-1 .3-1.400 0L.29 12.500a1 1 0 0 1 0-1.400C3.340 8.400 7.460 7 12 7s8.660 1.400 11.710 4.100a1 1 0 0 1 0 1.400l-2.480 2.500c-.4.400-1 .3-1.400 0-.8-.7-1.700-1.100-2.700-1.600-.33-.16-.56-.5-.56-.9V10c-1.400-.5-3-.7-4.570-.7z"/></svg></span>
  </div>
  <div class="side-icons">
    <svg viewBox="0 0 24 24"><circle cx="12" cy="12" r="9.700" fill="none" stroke="#fff" stroke-width="2"/><path fill="#fff" d="M10.800 6.800h2.500v2.400h-2.500zM10.800 10.800h2.500v6.400h-2.500z"/></svg>
    <span class="ppl"><svg viewBox="0 0 24 24"><circle cx="8.800" cy="8" r="3.300" fill="none" stroke="#fff" stroke-width="2.100"/><path fill="none" stroke="#fff" stroke-width="2.100" d="M1.200 19v-1.800c0-2.300 4-3.700 7.600-3.700s7.600 1.400 7.600 3.700V19z"/><path fill="#fff" d="M14 3.800a4.300 4.300 0 0 1 0 8.500c1.200-2.400 1.200-6 0-8.500zM17 13.200c3.500.7 6.500 2 6.500 4.200V20h-4.700v-2.600c0-1.800-.7-3.200-1.800-4.200z"/></svg><b>18</b></span>
    <svg viewBox="0 0 24 24"><path fill="none" stroke="#fff" stroke-width="2.100" stroke-linejoin="round" d="M2.500 2.800h19.500v14.700H6l-3.500 3.700z"/><path stroke="#fff" stroke-width="1.700" d="M5.500 6.800h13M5.500 10.200h13M5.500 13.600h9"/></svg>
  </div>
</footer>
</body>
</html>
```
FILE: styles.css
```css
* { box-sizing: border-box; }
body { margin: 0; width: 1920px; height: 1080px; overflow: hidden; background: #202124; color: #fff; font-family: Inter, sans-serif; padding: 16px; }
svg { display: block; flex: none; }
.defs { position: absolute; width: 0; height: 0; }
.i { width: 24px; height: 24px; overflow: visible; }

.presenter { height: 40px; border-radius: 8px; background: #3c4043; display: flex; align-items: center; gap: 16px; padding-left: 16px; font-size: 14px; font-weight: 600; letter-spacing: -.07px; line-height: 38px; }
.presenter-avatar { width: 24px; height: 24px; border-radius: 50%; background: #78909c; font: 14px/24px Roboto, sans-serif; text-align: center; }

.stage { display: flex; justify-content: space-between; height: 944px; padding-top: 16px; }
.share { margin-top: 77px; width: 1378px; height: 775px; border-radius: 8px; overflow: hidden; background: #1c1e1e; font-family: "Open Sans", sans-serif; color: #c0c0c0; display: flex; flex-direction: column; }

/* browser chrome */
.tabbar { height: 30px; background: #000; display: flex; flex: none; }
.tab { display: flex; align-items: center; height: 29px; font-size: 10.600px; color: #ddd; white-space: nowrap; }
.tab .fav { width: 14px; height: 14px; margin-right: 7px; }
.tab-title { padding-bottom: 1px; }
.fade { letter-spacing: -.27px; -webkit-mask-image: linear-gradient(90deg, #000 90%, rgba(0,0,0,.2)); mask-image: linear-gradient(90deg, #000 90%, rgba(0,0,0,.2)); }
.tab-active { margin-left: 6px; width: 216px; height: 30px; background: #353535; border-radius: 8px 8px 0 0; padding-left: 11px; }
.tab-active .tab-title { width: 157px; }
.tab-meet { padding-left: 11px; width: 215px; border-right: 1px solid #333; }
.tab-meet .tab-title { width: 136px; }
.tab-meet .i + .i { margin-left: -4px; }
.tab-git { padding-left: 10px; width: 214px; border-right: 1px solid #333; }
.tab-git .tab-title { width: 157px; }
.newtab { margin: 3px 0 0 8px; }
.winctl { display: flex; gap: 17px; margin: 0 8px 0 auto; }
.navbar { height: 38px; flex: none; background: #353535; border-bottom: 2px solid #4a4b4b; display: grid; grid-template-columns: 29px 29px 33px 1098px 1fr; padding-left: 6px; align-items: center; }
.omnibox { height: 30px; border-radius: 15px; background: #202223; display: flex; align-items: center; padding-left: 10px; }
.lock { width: 10px; height: 12px; margin-right: 9px; }
.url { font-size: 11.900px; color: #8b8d8f; }
.url b { font-weight: 400; color: #eee; }
.omni-icons { display: grid; grid-template-columns: repeat(5, 29px); margin: 2px 0 0 auto; width: 143px; }
.ext { display: grid; grid-template-columns: repeat(6, 28.900px); margin: 1px 0 0 8px; }
.gmark { font: bold 6px "Liberation Sans", sans-serif; fill: #fff; }
.dark { fill: #222; }

/* editor header */
.app-head { height: 73px; flex: none; display: flex; padding-left: 17px; border-bottom: 1px solid #2b2d2d; }
.logo { width: 36px; height: 41px; margin-top: 15px; }
.head-main { margin-left: 22px; padding-top: 13px; }
.doc-title { font-size: 19px; line-height: 24px; height: 24px; color: #c8c8c8; }
.menu { display: grid; grid-template-columns: 69px 56px 51px 85px 57px 62px 353px; align-items: center; height: 34px; margin-top: 2px; font-size: 14.800px; color: #a9a9a9; }
.menu > span { white-space: nowrap; line-height: 20px; padding-bottom: 1px; }
.unsaved { height: 30px; border: 1px solid #6b3738; border-radius: 3px; background: #4f2d2f; color: #d97573; font-size: 12.800px; display: flex; align-items: center; gap: 6px; padding: 0 0 2px 9px; white-space: nowrap; }
.unsaved svg { width: 14px; height: 14px; }
.head-side { margin-left: auto; width: 153px; }
.sun { margin: 4px 0 0 120px; }
.share-btn { width: 117px; height: 36px; margin-top: 1px; border-radius: 4px; background: #b06000; color: #f0e6da; font: 15.700px "Liberation Sans", sans-serif; display: flex; align-items: center; gap: 6px; padding: 2px 0 0 13px; }
.share-btn svg { width: 16px; height: 16px; }
.toolbar { height: 42px; flex: none; border-bottom: 1px solid #303232; display: grid; grid-template-columns: 21px 19px 35px 34px 19px 24px 33px 23px 24px 34px 22px 25px 23px 24px 33px 23px 25px 33px 34px 21px 25px 19px 29px 20px 20px 22.500px 21.500px 16px 23px 21px 530px 22px 22px 24px; padding: 0 0 1px 21px; align-items: center; }
.zoom { width: 24px; display: flex; justify-content: center; font-size: 14.700px; padding-top: 5px; color: #a9a9a9; }

.work { display: flex; height: 549px; flex: none; }
/* shape library */
.sidebar { width: 238px; border-right: 1px solid #2a2c2c; position: relative; }
.cut-row { height: 16px; border-bottom: 1px solid #242626; overflow: hidden; padding-left: 22px; font-size: 14.200px; font-weight: 500; color: #c8c8c8; display: flex; align-items: flex-end; }
.cut-row span { line-height: 20px; margin-bottom: 6.500px; }
.lib-head { height: 40px; border-bottom: 1px solid #242626; display: flex; align-items: center; font-size: 14.100px; font-weight: 500; color: #c8c8c8; padding: 2px 0 0 4px; gap: 6px; }
.lib-head svg { width: 12px; height: 12px; }
.palette { width: 228px; height: 394px; }
.lib-uml { border-top: 1px solid #2a2c2c; border-bottom: 2px solid #2a2c2c; padding-top: 3px; font-size: 14.500px; }
.tiny { font: 4.300px "Liberation Sans", sans-serif; fill: #666; text-anchor: middle; }
.lit { fill: #8c8c8c; }
.item { font: 10px "Liberation Sans", sans-serif; fill: #b0b0b0; }
.more { height: 59px; padding: 12px 0 0 58px; }
.more-btn { width: 119px; height: 34px; padding: 0; border: 0; border-radius: 4px; background: #457cd6; color: #14233c; font: 15.600px "Liberation Sans", sans-serif; display: flex; align-items: center; justify-content: center; gap: 6px; -webkit-text-stroke: .3px #14233c; }
.more-btn svg { width: 11px; height: 11px; }
.side-scroll { position: absolute; left: 228px; top: 220px; width: 7px; height: 268px; border-radius: 3px; background: #323434; }

/* drawing area */
.canvas { width: 871px; background: #121212; position: relative; }
.diagram { width: 871px; height: 508px; }
.node { font: 13.400px "Liberation Sans", sans-serif; fill: #c6c6c6; text-anchor: middle; }
.u { text-decoration: underline; }
.pages { height: 41px; background: #1c1e1e; border-top: 1px solid #2c2e2e; display: flex; align-items: center; }
.dots { margin-left: 5px; }
.page-tab { margin-left: 5px; width: 94px; height: 40px; background: #121212; border: solid #2c2e2e; border-width: 0 1px; display: flex; align-items: center; padding-left: 13px; gap: 9px; font-size: 12.900px; color: #9a9a9a; }
.page-tab svg { width: 8px; height: 6px; }
.add { margin-left: 4px; }
.cursor { position: absolute; left: 496px; top: 509px; width: 9px; height: 13px; }

/* format panel */
.format { width: 269px; border-left: 1px solid #2a2c2c; font-size: 12.900px; color: #868686; overflow: hidden; }
.ftabs { display: flex; height: 39px; font-weight: 700; font-size: 13.400px; color: #a2a2a2; line-height: 41px; text-align: center; }
.ftab-on { width: 119px; padding-top: 1px; }
.ftab { width: 120px; background: #282a2a; border-bottom: 1px solid #333; line-height: 40px; }
.fclose { flex: 1; background: #282a2a; border-left: 1px solid #2e3030; border-bottom: 1px solid #333; padding: 13px 0 0 10px; }
.fclose svg { width: 10px; height: 10px; }
.fsec { border-bottom: 1px solid #2b2d2d; padding-left: 15px; }
.fsec h4 { margin: 0; font-size: 12.500px; font-weight: 700; color: #a4a4a4; line-height: 20px; }
.frow { display: flex; align-items: center; height: 27px; white-space: nowrap; }
.lab { padding-top: 1px; }
.cb { width: 14px; height: 14px; flex: none; border: 1.500px solid #6a6a6a; border-radius: 3px; margin-right: 8px; background: #151515; }
.cb.on { border: 0; background: #3d97f5; display: flex; justify-content: center; }
.cb.on::after { content: ""; width: 5px; height: 9px; border: solid #101418; border-width: 0 2px 2px 0; transform: rotate(42deg); margin-top: 1px; }
.sec-view { height: 186px; padding-top: 17px; }
.r1 { margin-top: 5px; height: 28px; }
.r1 .lab { width: 90px; }
.num { width: 54px; height: 24px; background: #101111; border: 1px solid #262828; border-radius: 4px; font: 13.500px/23px "Liberation Sans", sans-serif; color: #bbb; text-align: right; padding-right: 1px; }
.spin { width: 12px; height: 22px; margin: 0 4px 0 2px; }
.swatch { width: 50px; height: 25px; border: 1px solid #2a2c2c; border-radius: 4px; display: flex; align-items: center; gap: 3px; padding-left: 3px; }
.swatch i { width: 26px; height: 16px; background: #3e3e3e; border: 1px solid #aaa; }
.swatch svg { width: 12px; height: 14px; }
.r2 { height: 24px; }
.r3 { height: 29px; }
.fondo { padding-left: 22px; width: 112px; }
.btn { border: 1px solid #303232; border-radius: 4px; background: #1e2020; color: #c0c0c0; font: 13.400px "Liberation Sans", sans-serif; display: flex; align-items: center; justify-content: center; }
.r3 .btn { width: 124px; height: 25px; padding-bottom: 2px; }
.r4 { height: 26px; }
.half { width: 95px; }
.sec-opt { height: 128px; padding-top: 13px; }
.sec-opt h4 { margin-bottom: 4px; }
.sec-paper { height: 107px; padding-top: 14px; }
.select { margin-top: 5px; width: 232px; height: 22px; border: 1px solid #2a2c2c; border-radius: 4px; font: 13.400px/20px "Liberation Sans", sans-serif; color: #c0c0c0; padding: 0 5px 0 7px; display: flex; justify-content: space-between; align-items: center; }
.select svg { width: 10px; height: 7px; }
.radios { display: flex; margin: 12px 0 0 10px; white-space: nowrap; font-size: 12.800px; }
.rb { width: 14px; height: 14px; flex: none; border: 1.500px solid #6a6a6a; border-radius: 50%; margin-right: 8px; }
.rb.sel { border-color: #3d97f5; background: radial-gradient(circle, #3d97f5 3.800px, transparent 4.500px); }
.radios .lab { line-height: 17px; padding-top: 2px; letter-spacing: -.08px; }
.vert { width: 126px; }
.sec-btn { height: 71px; padding-top: 12px; }
.sec-btn .btn { width: 236px; height: 22px; margin-bottom: 2px; }

/* Windows taskbar */
.taskbar { flex: 1; display: flex; align-items: center; background: linear-gradient(90deg, #152540 0%, #182538 28%, #202433 45%, #281f2b 62%, #201f30 75%, #14233c 88%, #13243f 100%); padding: 1px 0 0 17px; color: #d4d7dc; }
.weather { width: 23px; height: 20px; }
.wtext { margin-left: 6px; width: 353px; font-size: 10.300px; line-height: 14.500px; }
.start { width: 21px; height: 21px; }
.search { margin-left: 13px; width: 197px; height: 29px; border-radius: 15px; background: #2d394e; display: flex; align-items: center; gap: 9px; padding-left: 10px; font-size: 11.700px; }
.search svg { width: 14px; height: 14px; }
.apps { display: grid; grid-template-columns: repeat(9, 39.500px); margin-left: 9.500px; position: relative; align-items: center; }
.a { width: 24px; height: 24px; overflow: visible; }
.chrome { width: 34px; height: 37px; margin-left: -5px; padding: 6px 5px 0; border-radius: 4px; background: #302a37; box-shadow: inset 0 0 0 1px #363040; position: relative; }
.chrome::after { content: ""; position: absolute; left: 10px; bottom: 1px; width: 14px; height: 3px; border-radius: 2px; background: #d19bdc; }
.wbadge { position: absolute; left: 92px; top: 3px; width: 14px; height: 14px; border-radius: 50%; background: #cf96d8; color: #2a1a2e; font-size: 10px; line-height: 14px; text-align: center; }
.cal { font: bold 6.500px "Liberation Sans", sans-serif; fill: #4285f4; text-anchor: middle; }
.tray { margin: 0 16px 0 auto; display: grid; grid-template-columns: 25px 29px 21px 22px 20px 69px 21px; align-items: center; }
.clock { font-size: 10.600px; line-height: 14.500px; text-align: right; white-space: nowrap; }
.tray-badge { width: 14px; height: 14px; margin-left: 6px; border-radius: 50%; background: #d195da; color: #3a2440; font-size: 10px; line-height: 14px; text-align: center; }

/* participants */
.people { width: 494px; display: flex; flex-wrap: wrap; gap: 12px; justify-content: center; align-content: flex-start; height: 928px; }
.tile { width: 241px; height: 176px; border-radius: 8px; background: #3c4043; position: relative; display: flex; align-items: center; justify-content: center; }
.av { width: 73px; height: 73px; border-radius: 50%; font: 39px/73px Roboto, sans-serif; text-align: center; }
.blue { background: #01579b; }
.brown { background: #5d4037; }
.orange { background: #f4511e; }
.green { background: #004d40; }
.amber { background: #ef6c00; }
.sky { background: #0288d1; }
.slate { background: #78909c; }
.lime { background: #689f38; }
.taupe { background: #8d6e63; }
.mute { position: absolute; right: 12px; top: 12px; width: 26px; height: 26px; border-radius: 50%; background: #323639; display: grid; place-items: center; }
.mute svg { width: 18px; height: 18px; }
.name { position: absolute; left: 16px; bottom: 12px; font-size: 14px; font-weight: 600; line-height: 20px; letter-spacing: -.1px; text-shadow: 0 1px 2px rgba(0,0,0,.6); }
.hover, .hover-front { position: absolute; left: 55px; top: 66px; width: 132px; height: 44px; }
.hover { border-radius: 22px; background: #292a2d; box-shadow: 0 1px 2px rgba(0,0,0,.3); }
.ghost { font: 39px Roboto, sans-serif; fill: #ee8d86; text-anchor: middle; }
.more-people { flex-direction: column; font: 500 14.600px/20px Roboto, sans-serif; gap: 17px; padding-top: 2px; }
.pair { display: flex; margin-left: 4px; }
.mini { width: 48px; height: 48px; border-radius: 50%; font: 26px/48px Roboto, sans-serif; text-align: center; }
.taupe { margin-left: -5px; box-shadow: 0 0 0 2px #3c4043; }
.self { width: 313px; }
.self .av { width: 94px; height: 94px; font-size: 50px; line-height: 94px; }

/* call controls */
.callbar { height: 80px; display: flex; align-items: center; }
.meta { display: flex; align-items: center; width: 738px; padding: 0 0 1px 8px; font-size: 16px; font-weight: 500; }
.meta i { width: 1px; height: 16px; background: #9aa0a6; margin: 0 7px 0 15px; }
.meta span:last-child { letter-spacing: .1px; }
.controls { display: flex; gap: 12px; margin-left: -4px; }
.cbtn { width: 40px; height: 40px; border-radius: 20px; background: #3c4043; display: grid; place-items: center; position: relative; }
.cbtn svg { width: 24px; height: 24px; overflow: visible; }
.cbtn.off { background: #2a2b2e; }
.cbtn.off svg { width: 20px; height: 20px; }
.cbtn b { position: absolute; left: 25px; top: -1px; width: 20px; height: 20px; border-radius: 50%; background: #fa7b17; font-size: 14px; font-weight: 500; line-height: 20px; text-align: center; }
.cbtn.end { width: 56px; background: #ea4335; }
.side-icons { margin-left: auto; display: flex; gap: 24px; padding-right: 8px; }
.side-icons svg { width: 24px; height: 24px; }
.ppl { position: relative; }
.ppl b { position: absolute; left: 13px; top: -21px; width: 26px; height: 20px; border-radius: 10px; background: #5f6368; font-size: 11px; line-height: 20px; text-align: center; }
```
